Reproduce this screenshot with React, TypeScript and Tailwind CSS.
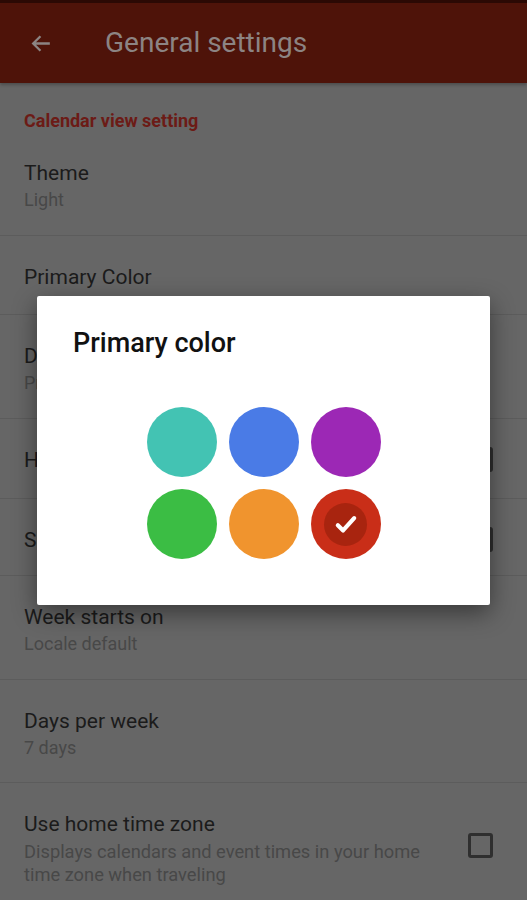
import React from 'react'

type Row = {
  title: string
  sub?: string
  lines?: string[]
  check?: boolean
  h: string
}

const rows: Row[] = [
  { title: 'Theme', sub: 'Light', h: 'h-[104px]' },
  { title: 'Primary Color', h: 'h-[79px]' },
  { title: 'Default view', sub: 'Previous view', h: 'h-[104px]' },
  { title: 'Hide weekends', check: true, h: 'h-[80px]' },
  { title: 'Show week numbers', check: true, h: 'h-[77px]' },
  { title: 'Week starts on', sub: 'Locale default', h: 'h-[104px]' },
  { title: 'Days per week', sub: '7 days', h: 'h-[103px]' },
  {
    title: 'Use home time zone',
    lines: ['Displays calendars and event times in your home', 'time zone when traveling'],
    check: true,
    h: 'h-[140px]',
  },
]

const swatches = [
  { c: 'bg-[#43c3b3]' },
  { c: 'bg-[#4a7be6]' },
  { c: 'bg-[#9c28b5]' },
  { c: 'bg-[#3bbd44]' },
  { c: 'bg-[#f0942e]' },
  { c: 'bg-[#c92e18]', selected: true },
]

const Checkbox: React.FC = () => (
  <div className="h-[25px] w-[25px] shrink-0 rounded-[3px] border-[3px] border-[#2f2f2f]" />
)

const SettingRow: React.FC<{ row: Row }> = ({ row }) => (
  <div className={`${row.h} flex items-start border-b border-[#5c5c5c] pl-[24px] pr-[34px] pt-[28px]`}>
    <div className="flex-1">
      <div className="text-[21px] leading-[26px] text-[#1b1b1b]">{row.title}</div>
      {row.sub ? <div className="text-[18px] leading-[28px] text-[#484848]">{row.sub}</div> : null}
      {row.lines ? (
        <div className="mt-[3px] text-[18.3px] leading-[23px] text-[#484848]">
          {row.lines.map((l) => (
            <div key={l}>{l}</div>
          ))}
        </div>
      ) : null}
    </div>
    {row.check ? (
      <div className={row.lines ? 'mt-[22px]' : 'mt-[0px]'}>
        <Checkbox />
      </div>
    ) : null}
  </div>
)

export default function App() {
  return (
    <div
      className="relative h-[900px] w-[527px] overflow-hidden bg-[#666666]"
      style={{ fontFamily: 'Roboto, "Noto Sans", sans-serif' }}
    >
      {/* app bar, dimmed by the dialog scrim */}
      <div className="flex h-[83px] items-center border-t-[3px] border-[#2b0904] bg-[#4e1309] shadow-[0_2px_3px_rgba(0,0,0,0.25)]">
        <svg viewBox="0 0 24 24" className="ml-[29px] h-[25px] w-[25px]" fill="none" stroke="#8c8483" strokeWidth="2.2">
          <path d="M20 12H4.5M11 5l-7 7 7 7" />
        </svg>
        <div className="ml-[51px] text-[28px] text-[#8c8483]">General settings</div>
      </div>

      <div className="h-[49px] pl-[24px] pt-[28px] text-[18px] font-bold leading-[20px] text-[#6c1b16]">
        Calendar view setting
      </div>

      {rows.map((r) => (
        <SettingRow key={r.title} row={r} />
      ))}

      {/* dialog */}
      <div className="absolute left-[37px] top-[296px] h-[309px] w-[453px] rounded-[2px] bg-white shadow-[0_8px_24px_rgba(0,0,0,0.45)]">
        <div className="px-[36px] pt-[31px] text-[27px] font-medium leading-[32px] text-[#111]">Primary color</div>
        <div className="mx-auto mt-[48px] grid w-[234px] grid-cols-3 gap-[12px]">
          {swatches.map((s, i) => (
            <div key={i} className={`${s.c} flex h-[70px] w-[70px] items-center justify-center rounded-full`}>
              {s.selected ? (
                <div className="flex h-[43px] w-[43px] items-center justify-center rounded-full bg-[#a8240f]">
                  <svg viewBox="0 0 24 24" className="h-[28px] w-[28px]" fill="none" stroke="white" strokeWidth="3.6" strokeLinecap="round" strokeLinejoin="round">
                    <path d="M5 13l4.5 4.5L19 7" />
                  </svg>
                </div>
              ) : null}
            </div>
          ))}
        </div>
      </div>
    </div>
  )
}
